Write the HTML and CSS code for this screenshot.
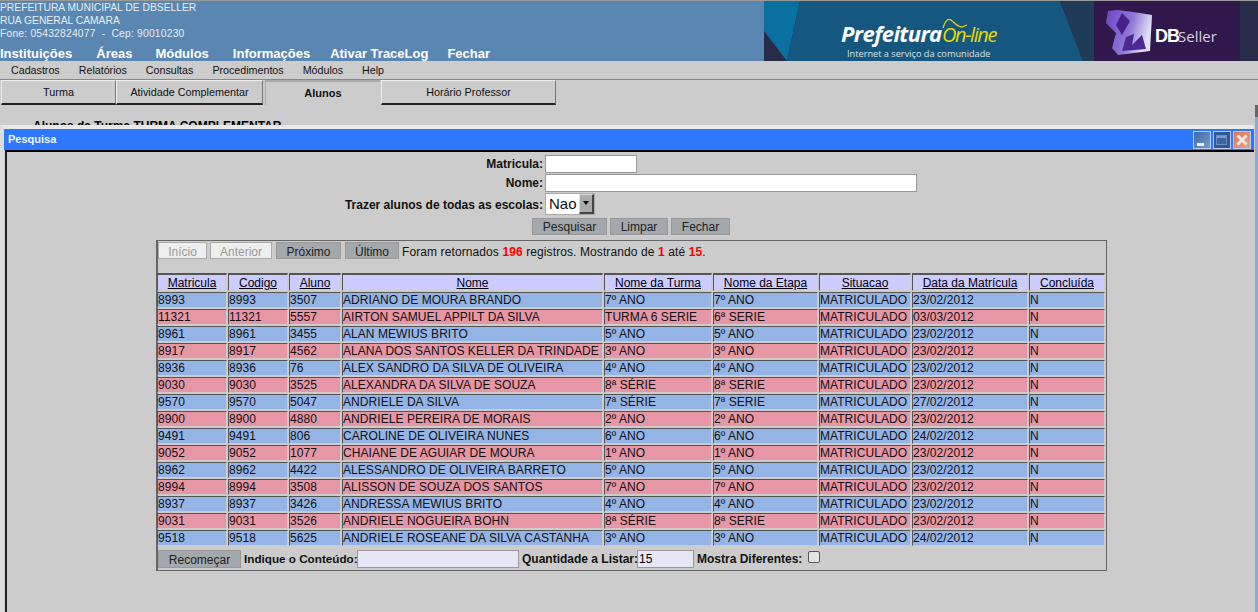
FILE: index.html
```html
<!DOCTYPE html>
<html lang="en">
<head>
	<meta http-equiv="Content-Type" content="text/html;charset=utf-8">
	<title>Alunos da Turma</title>
	<link rel="stylesheet" href="styles.css">
</head>

<body>

<div class="header">
	<div class="header-left">
		<div class="address">
			<div>PREFEITURA MUNICIPAL DE DBSELLER</div>
			<div>RUA GENERAL CAMARA</div>
			<div class="phone">Fone: 05432824077 &nbsp;-&nbsp; Cep: 90010230</div>
		</div>
		<div class="main-menu">
			<a>Instituições</a>
			<a>Áreas</a>
			<a class="m-mod">Módulos</a>
			<a class="m-inf">Informações</a>
			<a class="m-ati">Ativar TraceLog</a>
			<a class="m-fec">Fechar</a>
		</div>
	</div>
	<svg class="banner" width="494" height="60" viewBox="0 0 494 60">
		<defs>
			<linearGradient id="logo-fill" x1="0" y1="0" x2="1" y2="0.3">
				<stop offset="0" stop-color="#6a45c4"/>
				<stop offset="0.6" stop-color="#8f7ad6"/>
				<stop offset="1" stop-color="#e4e0f4"/>
			</linearGradient>
		</defs>
		<rect width="494" height="60" fill="#282c48"/>
		<polygon points="0,0 36,0 23,60 0,30" fill="#0a709f"/>
		<polygon points="36,0 296,0 319,60 23,60" fill="#15577f"/>
		<polygon points="296,0 330,0 330,60 319,60" fill="#1f3b58"/>
		<rect x="330" width="146" height="60" fill="#31184c"/>
		<polygon points="344,10 354,9 376,12 388,14 386,50 354,54 348,47 352,32 342,22" fill="url(#logo-fill)"/>
		<polygon points="358,12 366,20 358,34 352,24" fill="#48208c"/>
		<polygon points="358,50 362,36 370,33 368,44 378,34 382,48" fill="#4a2a92"/>
		<text class="db-bold" x="391" y="41">DB</text><text class="db-light" x="414" y="41">Seller</text>
		<text class="pref-white" x="77" y="41">Prefeitura</text>
		<text class="pref-yellow" x="178" y="41">On-line</text>
		<path d="M179 27 C181 20 184 17 187 19 C191 22 193 26 198 26 L203 24" fill="none" stroke="#e8d000" stroke-width="1.3"/>
		<text class="pref-sub" x="83" y="56">Internet a serviço da comunidade</text>
	</svg>
</div>

<div class="sub-menu">
	<a>Cadastros</a>
	<a>Relatórios</a>
	<a>Consultas</a>
	<a>Procedimentos</a>
	<a>Módulos</a>
	<a>Help</a>
</div>

<div class="tabs">
	<div class="tab tab-turma">Turma</div>
	<div class="tab tab-ativ">Atividade Complementar</div>
	<div class="tab tab-active">Alunos</div>
	<div class="tab tab-horario">Horário Professor</div>
</div>

<div class="behind-title">Alunos da Turma TURMA COMPLEMENTAR</div>

<div class="window">
	<div class="win-title">
		<span class="win-caption">Pesquisa</span>
		<div class="win-buttons">
			<div class="win-btn win-min"><svg width="16" height="16" viewBox="0 0 16 16"><rect x="3" y="11" width="7" height="3" fill="#e8eef8"/></svg></div>
			<div class="win-btn win-max"><svg width="16" height="16" viewBox="0 0 16 16"><rect x="2.5" y="3.5" width="10" height="9" fill="#3f659f" stroke="#6f8fc4"/><rect x="3" y="4" width="9" height="2" fill="#7f9ccc"/></svg></div>
			<div class="win-btn win-close"><svg width="16" height="16" viewBox="0 0 16 16"><path d="M3.5 3.5 L12.5 12.5 M12.5 3.5 L3.5 12.5" stroke="#f6e6df" stroke-width="3"/></svg></div>
		</div>
	</div>

	<div class="win-body">
		<div class="search-form">
			<label>Matricula:</label>
			<div><input type="text" class="in-mat"></div>
			<label>Nome:</label>
			<div><input type="text" class="in-nome"></div>
			<label class="lbl-select">Trazer alunos de todas as escolas:</label>
			<div class="fake-select"><span>Nao</span><b></b></div>
		</div>
		<div class="search-buttons">
			<button class="btn">Pesquisar</button>
			<button class="btn">Limpar</button>
			<button class="btn">Fechar</button>
		</div>

		<div class="results">
			<div class="pager">
				<button class="btn-off b-inicio">Início</button>
				<button class="btn-off b-anterior">Anterior</button>
				<button class="btn-dark b-proximo">Próximo</button>
				<button class="btn-dark b-ultimo">Último</button>
				<span class="pager-text">Foram retornados <b>196</b> registros. Mostrando de <b>1</b> até <b>15</b>.</span>
			</div>

			<table class="grid">
				<colgroup>
					<col class="c1"><col class="c2"><col class="c3"><col class="c4"><col class="c5"><col class="c6"><col class="c7"><col class="c8"><col class="c9">
				</colgroup>
				<tr class="head-row"><th>Matricula</th><th>Codigo</th><th>Aluno</th><th>Nome</th><th>Nome da Turma</th><th>Nome da Etapa</th><th>Situacao</th><th>Data da Matrícula</th><th>Concluída</th></tr>
				<tr class="blue"><td>8993</td><td>8993</td><td>3507</td><td>ADRIANO DE MOURA BRANDO</td><td>7º ANO</td><td>7º ANO</td><td>MATRICULADO</td><td>23/02/2012</td><td>N</td></tr>
				<tr class="red"><td>11321</td><td>11321</td><td>5557</td><td>AIRTON SAMUEL APPILT DA SILVA</td><td>TURMA 6 SERIE</td><td>6ª SERIE</td><td>MATRICULADO</td><td>03/03/2012</td><td>N</td></tr>
				<tr class="blue"><td>8961</td><td>8961</td><td>3455</td><td>ALAN MEWIUS BRITO</td><td>5º ANO</td><td>5º ANO</td><td>MATRICULADO</td><td>23/02/2012</td><td>N</td></tr>
				<tr class="red"><td>8917</td><td>8917</td><td>4562</td><td>ALANA DOS SANTOS KELLER DA TRINDADE</td><td>3º ANO</td><td>3º ANO</td><td>MATRICULADO</td><td>23/02/2012</td><td>N</td></tr>
				<tr class="blue"><td>8936</td><td>8936</td><td>76</td><td>ALEX SANDRO DA SILVA DE OLIVEIRA</td><td>4º ANO</td><td>4º ANO</td><td>MATRICULADO</td><td>23/02/2012</td><td>N</td></tr>
				<tr class="red"><td>9030</td><td>9030</td><td>3525</td><td>ALEXANDRA DA SILVA DE SOUZA</td><td>8ª SÉRIE</td><td>8ª SERIE</td><td>MATRICULADO</td><td>23/02/2012</td><td>N</td></tr>
				<tr class="blue"><td>9570</td><td>9570</td><td>5047</td><td>ANDRIELE DA SILVA</td><td>7ª SÉRIE</td><td>7ª SERIE</td><td>MATRICULADO</td><td>27/02/2012</td><td>N</td></tr>
				<tr class="red"><td>8900</td><td>8900</td><td>4880</td><td>ANDRIELE PEREIRA DE MORAIS</td><td>2º ANO</td><td>2º ANO</td><td>MATRICULADO</td><td>23/02/2012</td><td>N</td></tr>
				<tr class="blue"><td>9491</td><td>9491</td><td>806</td><td>CAROLINE DE OLIVEIRA NUNES</td><td>6º ANO</td><td>6º ANO</td><td>MATRICULADO</td><td>24/02/2012</td><td>N</td></tr>
				<tr class="red"><td>9052</td><td>9052</td><td>1077</td><td>CHAIANE DE AGUIAR DE MOURA</td><td>1º ANO</td><td>1º ANO</td><td>MATRICULADO</td><td>23/02/2012</td><td>N</td></tr>
				<tr class="blue"><td>8962</td><td>8962</td><td>4422</td><td>ALESSANDRO DE OLIVEIRA BARRETO</td><td>5º ANO</td><td>5º ANO</td><td>MATRICULADO</td><td>23/02/2012</td><td>N</td></tr>
				<tr class="red"><td>8994</td><td>8994</td><td>3508</td><td>ALISSON DE SOUZA DOS SANTOS</td><td>7º ANO</td><td>7º ANO</td><td>MATRICULADO</td><td>23/02/2012</td><td>N</td></tr>
				<tr class="blue"><td>8937</td><td>8937</td><td>3426</td><td>ANDRESSA MEWIUS BRITO</td><td>4º ANO</td><td>4º ANO</td><td>MATRICULADO</td><td>23/02/2012</td><td>N</td></tr>
				<tr class="red"><td>9031</td><td>9031</td><td>3526</td><td>ANDRIELE NOGUEIRA BOHN</td><td>8ª SÉRIE</td><td>8ª SERIE</td><td>MATRICULADO</td><td>23/02/2012</td><td>N</td></tr>
				<tr class="blue"><td>9518</td><td>9518</td><td>5625</td><td>ANDRIELE ROSEANE DA SILVA CASTANHA</td><td>3º ANO</td><td>3º ANO</td><td>MATRICULADO</td><td>24/02/2012</td><td>N</td></tr>
			</table>

			<div class="filter-bar">
				<button class="btn-dark b-recomecar">Recomeçar</button>
				<label class="lbl-cont">Indique o Conteúdo:</label><input type="text" class="in-filter">
				<label class="lbl-qtd">Quantidade a Listar:</label><input type="text" class="in-qtd" value="15">
				<label class="lbl-dif">Mostra Diferentes:</label><span class="check"></span>
			</div>
		</div>
	</div>
</div>

<div class="side-strip"></div>

</body>
</html>
```

FILE: styles.css
```css
html, body { margin: 0; padding: 0; height: 612px; overflow: hidden; }
body { background: #ccc; font-family: "Liberation Sans", Arial, sans-serif; font-size: 11px; color: #000; position: relative; }

/* top banner */
.header { display: flex; justify-content: space-between; height: 60px; background: #5a87b2; border-top: 1px solid #999; }
.address { color: #e6edf4; font-size: 10.3px; line-height: 13px; height: 44px; box-sizing: border-box; }
.address div { height: 13px; }
.phone { letter-spacing: 0.2px; }
.main-menu { display: flex; gap: 24px; color: #fff; font-size: 13px; font-weight: bold; line-height: 17px; }
.m-mod { margin-left: -1px; }
.m-ati { margin-left: -4px; }
.m-fec { margin-left: -5px; }
.banner { display: block; flex: none; }
.db-bold { font: bold 18px "Liberation Sans", sans-serif; fill: #fff; letter-spacing: -1px; }
.db-light { font: 15px "Open Sans", sans-serif; fill: #d8d4e4; }
.pref-white { font: italic bold 22px "Open Sans", sans-serif; fill: #fff; letter-spacing: -0.6px; }
.pref-yellow { font: italic 20px "Open Sans", sans-serif; fill: #ecd800; letter-spacing: -1.4px; }
.pref-sub { font: 9.2px "Open Sans", sans-serif; fill: #d8e2ea; }

/* menus and tabs */
.sub-menu { display: flex; gap: 19px; height: 18px; line-height: 19px; padding-left: 11px; border-bottom: 1px solid #888; font-size: 10.7px; color: #111; }
.tabs { display: flex; height: 25px; padding-left: 1px; font-size: 10.8px; color: #111; }
.tab { box-sizing: border-box; height: 25px; line-height: 23px; text-align: center; border: 1px solid #ccc; border-top-color: #eee; border-left-color: #eee; border-right: 1px solid #777; border-bottom: 2px solid #222; background: #ccc; }
.tab-turma { width: 115px; }
.tab-ativ { width: 147px; }
.tab-active { width: 115px; margin-left: 2px; border: 0; border-top: 2px solid #aaa; border-left: 1px solid #aaa; font-size: 11px; font-weight: bold; line-height: 23px; }
.tab-horario { width: 175px; margin-left: 1px; }
.behind-title { font-size: 12px; font-weight: bold; padding: 14px 0 0 33px; }

.side-strip { position: absolute; right: 0; top: 105px; width: 3px; height: 507px; background: linear-gradient(#666 0, #666 12px, #8aa8e0 12px); }

/* floating window */
.window { position: absolute; left: 0; top: 125px; width: 1254px; height: 487px; box-sizing: border-box; background: #ccc; border-top: 4px solid #e8e8e8; border-left: 4px solid #ddd; }
.win-title { display: flex; justify-content: space-between; align-items: center; height: 21px; background: #2e78ff; color: #f2f6ff; font-size: 11px; font-weight: bold; padding-left: 4px; }
.win-caption { margin-top: -1px; }
.win-buttons { display: flex; gap: 2px; padding-right: 3px; }
.win-btn { box-sizing: border-box; width: 18px; height: 18px; border: 1px solid #b8cdf5; }
.win-btn svg { display: block; }
.win-min { background: linear-gradient(135deg, #3b6aae, #7c9bc8); }
.win-max { background: #2f5794; }
.win-close { background: linear-gradient(135deg, #d9785c, #e8a088); }
.win-body { height: 462px; box-sizing: border-box; border-top: 2px solid #000; border-left: 2px solid #222; margin-left: 1px; font-size: 12px; }

/* search form */
.search-form { display: grid; grid-template-columns: 536px 1fr; column-gap: 2px; grid-template-rows: 19px 19px 25px; padding-top: 3px; }
.search-form label { font-weight: bold; font-size: 12px; text-align: right; line-height: 18px; color: #111; }
.search-form .lbl-select { line-height: 25px; }
input { box-sizing: border-box; display: block; font-family: "Liberation Sans", sans-serif; font-size: 12px; border: 1px solid #999; background: #fff; margin: 0; }
.in-mat { width: 92px; height: 18px; }
.in-nome { width: 372px; height: 18px; }
.fake-select { box-sizing: border-box; display: flex; width: 50px; height: 22px; background: #fff; border: 1px solid #aaa; font: 15px "Liberation Sans", sans-serif; line-height: 20px; padding-left: 3px; position: relative; color: #111; }
.fake-select b { position: absolute; right: 0; top: 0; box-sizing: border-box; width: 15px; height: 20px; background: #aaa; border: 1px solid #ddd; border-right: 2px solid #444; border-bottom: 2px solid #444; }
.fake-select b::after { content: ""; position: absolute; left: 3px; top: 6px; border: 3px solid transparent; border-top: 4px solid #000; }

button { font-family: "Liberation Sans", sans-serif; font-size: 12px; margin: 0; padding: 0; box-sizing: border-box; cursor: default; color: #222; }
.btn { height: 17px; background: #a3a8ad; border: 1px solid #999; padding-top: 2px; line-height: 13px; }
.search-buttons { display: flex; gap: 3px; padding-left: 525px; }
.search-buttons .btn:nth-child(1) { width: 75px; }
.search-buttons .btn:nth-child(2) { width: 58px; }
.search-buttons .btn:nth-child(3) { width: 59px; }

/* results box */
.results { box-sizing: border-box; width: 951px; height: 331px; margin: 5px 0 0 149px; border: 1px solid #666; border-left-width: 2px; }
.pager { display: flex; align-items: center; height: 17px; margin-top: 1px; }
.btn-off { height: 17px; background: #eee; border: 1px solid #aaa; color: #999; padding-top: 2px; }
.btn-dark { height: 17px; background: #a3a8ad; border: 1px solid #999; padding-top: 2px; }
.b-inicio { width: 49px; }
.b-anterior { width: 62px; margin-left: 3px; }
.b-proximo { width: 65px; margin-left: 4px; }
.b-ultimo { width: 54px; margin-left: 4px; }
.pager-text { margin-left: 3px; margin-top: 3px; font-size: 12px; letter-spacing: 0.1px; white-space: nowrap; color: #111; }
.pager-text b { color: #f00; }

.grid { table-layout: fixed; border-collapse: separate; border-spacing: 1px; width: 950px; margin: 13px 0 0 -2px; font-size: 12px; color: #111; }
.c1 { width: 70px; } .c2 { width: 60px; } .c3 { width: 52px; } .c4 { width: 261px; } .c5 { width: 108px; } .c6 { width: 105px; } .c7 { width: 92px; } .c8 { width: 116px; } .c9 { width: 76px; }
.grid th, .grid td { box-sizing: border-box; padding: 0; white-space: nowrap; overflow: hidden; border-top: 1px solid #555; border-left: 1px solid #555; border-right: 1px solid #ccc; border-bottom: 1px solid #ccc; }
.grid th { height: 18px; border-top-width: 2px; font-weight: normal; text-decoration: underline; background: #ccf; padding-top: 1px; line-height: 14px; text-align: center; color: #001; }
.grid td { height: 16px; line-height: 14px; letter-spacing: 0.06px; }
.blue td { background: #94b4e6; }
.red td { background: #e696a4; }

.filter-bar { display: flex; align-items: center; height: 19px; margin-top: 2px; font-size: 11.7px; color: #111; }
.filter-bar label { font-weight: bold; white-space: nowrap; }
.filter-bar input { height: 18px; background: #e6e6f4; }
.b-recomecar { width: 83px; height: 18px; margin-right: 3px; }
.lbl-cont { width: 113px; }
.in-filter { width: 162px; }
.lbl-qtd { width: 115px; margin-left: 3px; font-size: 12px; }
.in-qtd { width: 57px; padding-left: 1px; }
.lbl-dif { width: 107px; margin-left: 3px; font-size: 12px; }
.check { display: block; box-sizing: border-box; width: 12px; height: 12px; margin: -4px 0 0 4px; background: #e4e4e4; border: 1px solid #555; border-radius: 2px; }
```
